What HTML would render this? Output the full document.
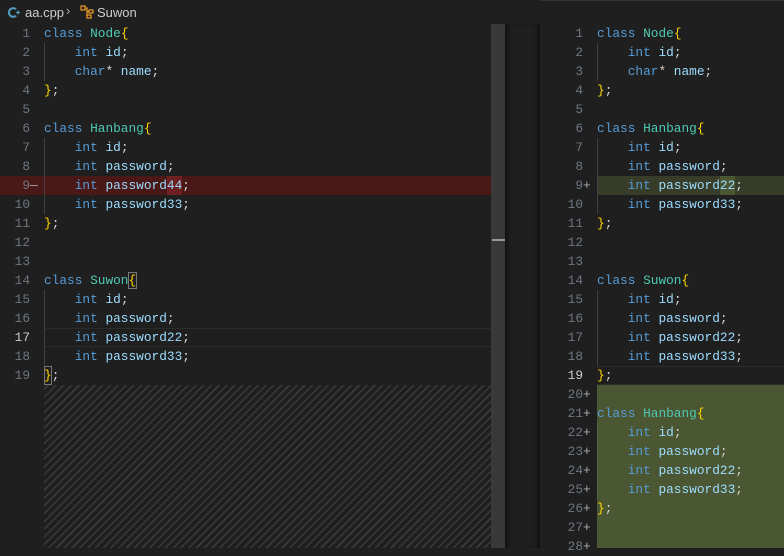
<!DOCTYPE html>
<html><head><meta charset="utf-8"><style>
*{margin:0;padding:0;box-sizing:border-box}
body{width:784px;height:548px;overflow:hidden;background:#1f1f1f;font-family:"Liberation Mono",monospace;font-size:12.8px;position:relative;color:#d4d4d4}
.bc{position:absolute;left:0;top:0;height:24px;width:784px;font-family:"Liberation Sans",sans-serif;font-size:13px;color:#cccccc}
.ln{position:absolute;height:19px;line-height:19px;white-space:pre}
.n{color:#6e7681;text-align:right;width:30px}
.nr{color:#6e7681;text-align:right;width:44px}
.k{color:#569cd6}.t{color:#4ec9b0}.v{color:#9cdcfe}.b{color:#ffd700}.p{color:#d4d4d4}
.g{position:absolute;width:1px;background:#404040}
</style></head><body>
<div class="bc">
<svg style="position:absolute;left:7px;top:6px" width="14" height="13" viewBox="0 0 14 13"><path d="M9 3.2A4.3 4.3 0 1 0 9 9.8" stroke="#519aba" stroke-width="2.2" fill="none"/><path d="M9 6.5h4M11 4.5v4" stroke="#519aba" stroke-width="1.3"/></svg>
<span style="position:absolute;left:25px;top:5px">aa.cpp</span>
<span style="position:absolute;left:66px;top:3px;color:#aaa">›</span>
<svg style="position:absolute;left:80px;top:5px" width="15" height="14" viewBox="0 0 15 14"><g stroke="#ee9d28" fill="none" stroke-width="1.2"><rect x="1" y="1" width="4" height="4"/><rect x="9" y="5" width="4" height="3"/><rect x="7" y="10" width="4" height="3"/><path d="M5 3h2v8M7 6.5h2"/></g></svg>
<span style="position:absolute;left:97px;top:5px">Suwon</span>
</div>
<div style="position:absolute;left:540px;top:0;width:244px;height:2px;border-top:1px solid #333"></div>

<!-- left pane -->
<div style="position:absolute;left:0;top:176px;width:491px;height:19px;background:#4b1818"></div>
<div style="position:absolute;left:167px;top:176px;width:15px;height:19px;background:#6e1f1f"></div>
<div style="position:absolute;left:44px;top:328px;width:447px;height:19px;border-top:1px solid #2c2c2c;border-bottom:1px solid #2c2c2c"></div>
<div style="position:absolute;left:44px;top:385px;width:447px;height:163px;background:repeating-linear-gradient(-45deg,#1f1f1f 0 4px,#3a3a3a 4px 5.5px)"></div>
<div style="position:absolute;left:491px;top:24px;width:14px;height:524px;background:#393939"></div>
<div style="position:absolute;left:492px;top:239px;width:13px;height:2px;background:#999"></div>
<div style="position:absolute;left:505px;top:24px;width:35px;height:524px;background:#1f1f1f;box-shadow:inset 5px 0 5px -3px #0e0e0e,inset -5px 0 5px -3px #0e0e0e"></div>
<div class="g" style="left:44px;top:43px;height:38px"></div>
<div class="g" style="left:44px;top:138px;height:76px"></div>
<div class="g" style="left:44px;top:290px;height:76px"></div>
<div style="position:absolute;left:44px;top:366px;width:8px;height:19px;border:1px solid #777"></div>

<div class="ln n" style="left:0;top:24px">1</div><div class="ln" style="left:44px;top:24px"><span class="k">class</span> <span class="t">Node</span><span class="b">{</span></div>
<div class="ln n" style="left:0;top:43px">2</div><div class="ln" style="left:44px;top:43px">    <span class="k">int</span> <span class="v">id</span>;</div>
<div class="ln n" style="left:0;top:62px">3</div><div class="ln" style="left:44px;top:62px">    <span class="k">char</span>* <span class="v">name</span>;</div>
<div class="ln n" style="left:0;top:81px">4</div><div class="ln" style="left:44px;top:81px"><span class="b">}</span>;</div>
<div class="ln n" style="left:0;top:100px">5</div>
<div class="ln n" style="left:0;top:119px">6</div><div class="ln" style="left:44px;top:119px"><span class="k">class</span> <span class="t">Hanbang</span><span class="b">{</span></div>
<div class="ln n" style="left:0;top:138px">7</div><div class="ln" style="left:44px;top:138px">    <span class="k">int</span> <span class="v">id</span>;</div>
<div class="ln n" style="left:0;top:157px">8</div><div class="ln" style="left:44px;top:157px">    <span class="k">int</span> <span class="v">password</span>;</div>
<div class="ln n" style="left:0;top:176px">9</div><div class="ln" style="left:30px;top:176px;color:#aaa">—</div><div class="ln" style="left:44px;top:176px">    <span class="k">int</span> <span class="v">password44</span>;</div>
<div class="ln n" style="left:0;top:195px">10</div><div class="ln" style="left:44px;top:195px">    <span class="k">int</span> <span class="v">password33</span>;</div>
<div class="ln n" style="left:0;top:214px">11</div><div class="ln" style="left:44px;top:214px"><span class="b">}</span>;</div>
<div class="ln n" style="left:0;top:233px">12</div>
<div class="ln n" style="left:0;top:252px">13</div>
<div class="ln n" style="left:0;top:271px">14</div><div class="ln" style="left:44px;top:271px"><span class="k">class</span> <span class="t">Suwon</span><span class="b" style="outline:1px solid #777">{</span></div>
<div class="ln n" style="left:0;top:290px">15</div><div class="ln" style="left:44px;top:290px">    <span class="k">int</span> <span class="v">id</span>;</div>
<div class="ln n" style="left:0;top:309px">16</div><div class="ln" style="left:44px;top:309px">    <span class="k">int</span> <span class="v">password</span>;</div>
<div class="ln n" style="left:0;top:328px;color:#ccc">17</div><div class="ln" style="left:44px;top:328px">    <span class="k">int</span> <span class="v">password22</span>;</div>
<div class="ln n" style="left:0;top:347px">18</div><div class="ln" style="left:44px;top:347px">    <span class="k">int</span> <span class="v">password33</span>;</div>
<div class="ln n" style="left:0;top:366px">19</div><div class="ln" style="left:44px;top:366px"><span class="b">}</span>;</div>

<!-- right pane -->
<div style="position:absolute;left:597px;top:176px;width:187px;height:19px;background:#373d29"></div>
<div style="position:absolute;left:720px;top:176px;width:15px;height:19px;background:#4b5632"></div>
<div style="position:absolute;left:597px;top:366px;width:187px;height:19px;border-top:1px solid #2c2c2c;border-bottom:1px solid #2c2c2c"></div>
<div style="position:absolute;left:597px;top:385px;width:187px;height:163px;background:#4b5632"></div>
<div class="g" style="left:597px;top:43px;height:38px"></div>
<div class="g" style="left:597px;top:138px;height:76px"></div>
<div class="g" style="left:597px;top:290px;height:76px"></div>
<div class="g" style="left:597px;top:423px;height:76px;background:#5d6840"></div>

<div class="ln nr" style="left:539px;top:24px">1</div><div class="ln" style="left:597px;top:24px"><span class="k">class</span> <span class="t">Node</span><span class="b">{</span></div>
<div class="ln nr" style="left:539px;top:43px">2</div><div class="ln" style="left:597px;top:43px">    <span class="k">int</span> <span class="v">id</span>;</div>
<div class="ln nr" style="left:539px;top:62px">3</div><div class="ln" style="left:597px;top:62px">    <span class="k">char</span>* <span class="v">name</span>;</div>
<div class="ln nr" style="left:539px;top:81px">4</div><div class="ln" style="left:597px;top:81px"><span class="b">}</span>;</div>
<div class="ln nr" style="left:539px;top:100px">5</div>
<div class="ln nr" style="left:539px;top:119px">6</div><div class="ln" style="left:597px;top:119px"><span class="k">class</span> <span class="t">Hanbang</span><span class="b">{</span></div>
<div class="ln nr" style="left:539px;top:138px">7</div><div class="ln" style="left:597px;top:138px">    <span class="k">int</span> <span class="v">id</span>;</div>
<div class="ln nr" style="left:539px;top:157px">8</div><div class="ln" style="left:597px;top:157px">    <span class="k">int</span> <span class="v">password</span>;</div>
<div class="ln nr" style="left:539px;top:176px">9</div><div class="ln" style="left:583px;top:176px;color:#aaa">+</div><div class="ln" style="left:597px;top:176px">    <span class="k">int</span> <span class="v">password22</span>;</div>
<div class="ln nr" style="left:539px;top:195px">10</div><div class="ln" style="left:597px;top:195px">    <span class="k">int</span> <span class="v">password33</span>;</div>
<div class="ln nr" style="left:539px;top:214px">11</div><div class="ln" style="left:597px;top:214px"><span class="b">}</span>;</div>
<div class="ln nr" style="left:539px;top:233px">12</div>
<div class="ln nr" style="left:539px;top:252px">13</div>
<div class="ln nr" style="left:539px;top:271px">14</div><div class="ln" style="left:597px;top:271px"><span class="k">class</span> <span class="t">Suwon</span><span class="b">{</span></div>
<div class="ln nr" style="left:539px;top:290px">15</div><div class="ln" style="left:597px;top:290px">    <span class="k">int</span> <span class="v">id</span>;</div>
<div class="ln nr" style="left:539px;top:309px">16</div><div class="ln" style="left:597px;top:309px">    <span class="k">int</span> <span class="v">password</span>;</div>
<div class="ln nr" style="left:539px;top:328px">17</div><div class="ln" style="left:597px;top:328px">    <span class="k">int</span> <span class="v">password22</span>;</div>
<div class="ln nr" style="left:539px;top:347px">18</div><div class="ln" style="left:597px;top:347px">    <span class="k">int</span> <span class="v">password33</span>;</div>
<div class="ln nr" style="left:539px;top:366px;color:#ccc">19</div><div class="ln" style="left:597px;top:366px"><span class="b">}</span>;</div>
<div class="ln nr" style="left:539px;top:385px">20</div><div class="ln" style="left:583px;top:385px;color:#aaa">+</div>
<div class="ln nr" style="left:539px;top:404px">21</div><div class="ln" style="left:583px;top:404px;color:#aaa">+</div><div class="ln" style="left:597px;top:404px"><span class="k">class</span> <span class="t">Hanbang</span><span class="b">{</span></div>
<div class="ln nr" style="left:539px;top:423px">22</div><div class="ln" style="left:583px;top:423px;color:#aaa">+</div><div class="ln" style="left:597px;top:423px">    <span class="k">int</span> <span class="v">id</span>;</div>
<div class="ln nr" style="left:539px;top:442px">23</div><div class="ln" style="left:583px;top:442px;color:#aaa">+</div><div class="ln" style="left:597px;top:442px">    <span class="k">int</span> <span class="v">password</span>;</div>
<div class="ln nr" style="left:539px;top:461px">24</div><div class="ln" style="left:583px;top:461px;color:#aaa">+</div><div class="ln" style="left:597px;top:461px">    <span class="k">int</span> <span class="v">password22</span>;</div>
<div class="ln nr" style="left:539px;top:480px">25</div><div class="ln" style="left:583px;top:480px;color:#aaa">+</div><div class="ln" style="left:597px;top:480px">    <span class="k">int</span> <span class="v">password33</span>;</div>
<div class="ln nr" style="left:539px;top:499px">26</div><div class="ln" style="left:583px;top:499px;color:#aaa">+</div><div class="ln" style="left:597px;top:499px"><span class="b">}</span>;</div>
<div class="ln nr" style="left:539px;top:518px">27</div><div class="ln" style="left:583px;top:518px;color:#aaa">+</div>
<div class="ln nr" style="left:539px;top:537px">28</div><div class="ln" style="left:583px;top:537px;color:#aaa">+</div>
</body></html>
